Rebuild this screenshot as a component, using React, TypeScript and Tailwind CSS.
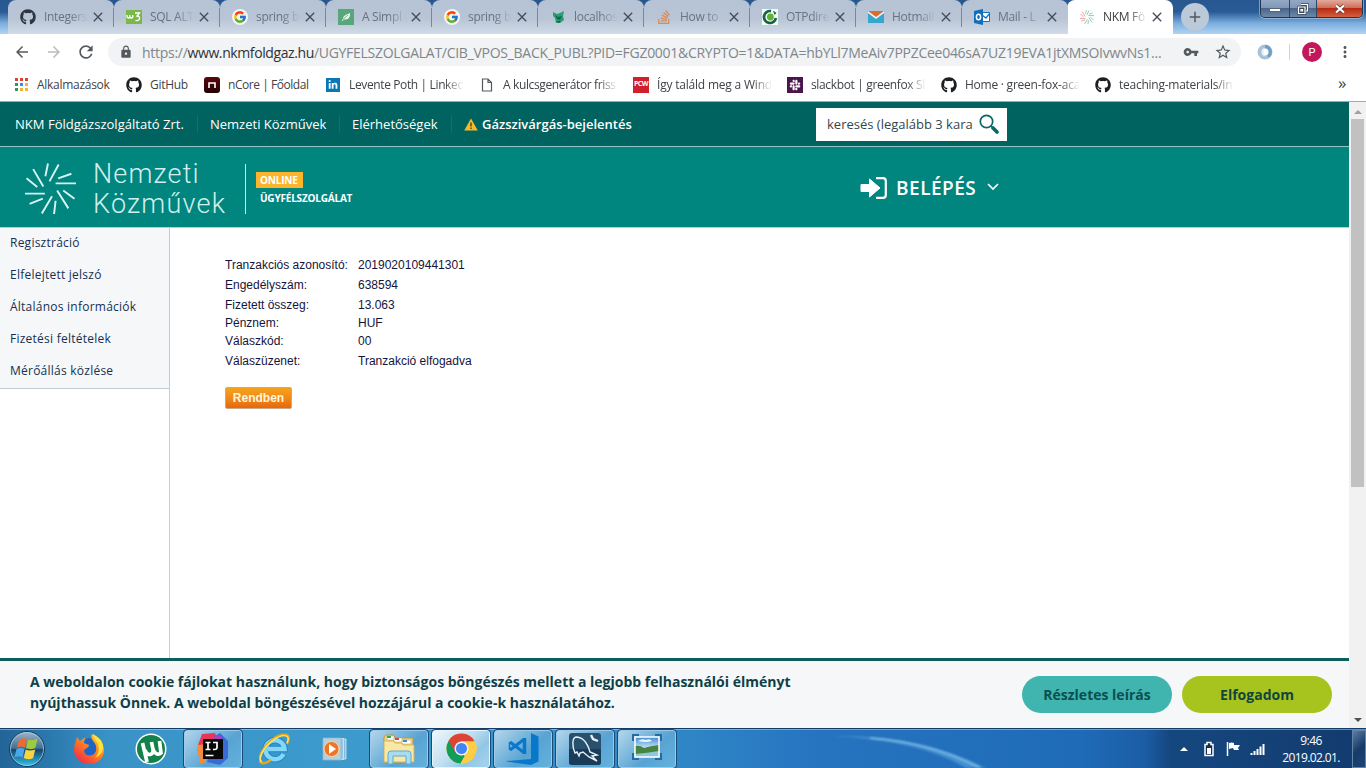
import type { ReactNode } from "react";
import { FaGithub, FaStackOverflow, FaSlack, FaLinkedinIn } from "react-icons/fa";
import { FcGoogle } from "react-icons/fc";
import {
  MdArrowBack, MdArrowForward, MdRefresh, MdLock, MdVpnKey, MdStarBorder, MdMoreVert, MdClose, MdAdd,
} from "react-icons/md";

function Burst({ className, colored }: { className: string; colored?: boolean }) {
  return (
    <svg viewBox="0 0 50 50" className={className} fill="none" stroke="currentColor" strokeWidth={colored ? 2.8 : 1.9}>
      <path d="M22.500 0.500 20 13M33 1.500 24 18M45.500 10.500 32.500 15M50 20H30M48.500 35 37.500 27M42.500 44.500 31.500 27M28.500 50 30 37M16.500 49.500 26.500 32.500" />
      <path stroke={colored ? "#e7858d" : "currentColor"} d="M4.500 40 17.500 35M0 30H19.500M1.500 15 12 23.500M8 6 18 23" />
    </svg>
  );
}

function W3() {
  return (
    <svg viewBox="0 0 16 14" className="h-3.5 w-4">
      <path fill="#7cb848" d="M0 0h16v14H0z" />
      <path d="M1 5v2q1.300 2 2.800 0V5v2q1.500 2 3 0V5M9 3h4.500L11 6q3 .2 2.500 3-.8 2-4 1.500" fill="none" stroke="#fff" strokeWidth="1.300" />
    </svg>
  );
}
function Leaf() {
  return (
    <svg viewBox="0 0 16 16" className="size-4">
      <path fill="#58a67a" d="M0 0h16v16H0z" />
      <path fill="#e9f5ee" d="M12 4c.5 4-1.500 7-6 6.500L4.500 12l-.8-.5 1.500-1.800C5 6.500 8 6 12 4z" />
      <path d="M5 10.500 10 6" stroke="#58a67a" strokeWidth=".8" />
    </svg>
  );
}
function Fox() {
  return (
    <svg viewBox="0 0 16 16" className="size-4">
      <path fill="#2a9d74" d="m3 3 4 2 3-1 4-2-1 5 1 4-4 3H6L5 9 3 7z" />
      <path fill="#17614f" d="m5 6 3 2 4-1-2 4-3-1zM6 12h5l-2 2z" />
    </svg>
  );
}
function Otp() {
  return (
    <svg viewBox="0 0 16 16" className="size-4">
      <path fill="#f4faf4" d="M0 0h16v16H0z" />
      <path d="M9 2.100A6 6 0 1 0 13.900 9" fill="none" stroke="#12654a" strokeWidth="2.700" />
      <circle cx="8.400" cy="8" r="3.400" fill="#62b132" />
      <path fill="#12654a" d="M11 1.500 14.500 4l-2 2z" />
    </svg>
  );
}
function Hotmail() {
  return (
    <svg viewBox="0 0 16 12" className="h-3 w-4">
      <path fill="#37a6cd" d="M0 0h16v12H0z" />
      <path fill="#e9f6fa" d="M0 0h16v2L8 8 0 2z" />
      <path fill="#e0692c" d="M0 0h16L8 6z" />
    </svg>
  );
}
function Outlook() {
  return (
    <svg viewBox="0 0 16 16" className="size-4">
      <path fill="#fff" stroke="#1273c0" d="M8 3.500h7.500v9H8z" />
      <path d="m8 6 4 3 4-5" fill="none" stroke="#1273c0" strokeWidth="1.300" />
      <path fill="#0f6fbe" d="m0 2 9-2v16l-9-2z" />
      <ellipse cx="4.500" cy="8" rx="2.100" ry="2.800" fill="none" stroke="#fff" strokeWidth="1.500" />
    </svg>
  );
}
const google = <span className="rounded-full bg-white/80 p-px"><FcGoogle className="size-3.5" /></span>;

const tabs: { title: string; icon: ReactNode }[] = [
  { title: "Integers", icon: <FaGithub className="size-4 text-[#2f3640]" /> },
  { title: "SQL ALT", icon: <W3 /> },
  { title: "spring b", icon: google },
  { title: "A Simpl", icon: <Leaf /> },
  { title: "spring b", icon: google },
  { title: "localhos", icon: <Fox /> },
  { title: "How to", icon: <FaStackOverflow className="size-4 text-[#d98a55]" /> },
  { title: "OTPdire", icon: <Otp /> },
  { title: "Hotmail", icon: <Hotmail /> },
  { title: "Mail - L", icon: <Outlook /> },
  { title: "NKM Fö", icon: <Burst className="size-3.5 text-[#6cbfa6]" colored /> },
];

function TabStrip() {
  return (
    <div className="relative flex h-[34px] bg-[linear-gradient(180deg,#28578f_0%,#2a5b95_35%,#7aaede_68%,#b2d3f3_100%)] pl-2">
      {tabs.map((t, i) => {
        const active = i === 10;
        return (
          <div
            key={i}
            className={
              active
                ? "-ml-px flex h-[34px] w-[106px] items-center rounded-t-lg bg-white pl-3 text-[#3c4043]"
                : "relative flex h-[34px] w-[106px] items-center rounded-t-lg bg-[linear-gradient(180deg,#b5c3d5,#b9c5d5_55%,#d1dce9)] pl-3 text-[#687381]"
            }
          >
            <span className="flex w-4 justify-center">{t.icon}</span>
            <span className="ml-2 w-[43px] overflow-hidden text-[12px] leading-4 tracking-[-0.3px] whitespace-nowrap [mask-image:linear-gradient(90deg,#000_60%,rgba(0,0,0,0.050))]">
              {t.title}
            </span>
            <MdClose className="ml-[3px] size-4 text-[#454c55]" />
            {!active && i < 9 && <span className="absolute top-2 right-0 h-[19px] w-px bg-[#7c8894]" />}
          </div>
        );
      })}
      <div className="mt-[3px] ml-2 flex size-7 items-center justify-center rounded-full bg-[#bcc9d8]">
        <MdAdd className="size-[18px] text-[#515960]" />
      </div>
      <div className="absolute top-0 right-[3px] flex h-[18px] w-[103px] overflow-hidden rounded-b-[5px] border border-t-0 border-[#1f3550] shadow-[0_0_0_1px_rgba(185,203,224,0.6)]">
        <div className="flex w-[29px] items-end justify-center border-r border-[#30455f] bg-[linear-gradient(180deg,#93a9c5,#8097b5_48%,#4a6689_50%,#6d88aa)] pb-[5px]">
          <span className="h-[4px] w-3 border border-[#56657a] bg-white" />
        </div>
        <div className="flex w-[27px] items-center justify-center border-r border-[#30455f] bg-[linear-gradient(180deg,#93a9c5,#8097b5_48%,#4a6689_50%,#6d88aa)]">
          <svg viewBox="0 0 12 12" className="size-3"><path d="M4 1.500h6.500V8H9M1.500 4H8v6.500H1.500zM4 6.500h1.500v1.500H4z" fill="none" stroke="#3c4a5c" strokeWidth="2.400" /><path d="M4 1.500h6.500V8H9M1.500 4H8v6.500H1.500zM4 6.500h1.500v1.500H4z" fill="none" stroke="#fff" strokeWidth="1.200" /></svg>
        </div>
        <div className="flex flex-1 items-center justify-center bg-[linear-gradient(180deg,#e2aa9b,#cf6f5b_45%,#b82b13_50%,#d3603f)]">
          <svg viewBox="0 0 12 10" className="h-2.5 w-3"><path d="M2 1.500 10 8.500M10 1.500 2 8.500" stroke="#54342f" strokeWidth="3.600" /><path d="M2 1.500 10 8.500M10 1.500 2 8.500" stroke="#fff" strokeWidth="2.200" /></svg>
        </div>
      </div>
    </div>
  );
}

function Toolbar() {
  return (
    <div className="flex h-[37px] items-center bg-white pb-px pl-[13px] text-[#55595d]">
      <MdArrowBack className="size-[18px]" />
      <MdArrowForward className="ml-[14px] size-[18px] text-[#babcbe]" />
      <MdRefresh className="ml-[13px] size-5" />
      <div className="ml-3 flex h-7 w-[1133px] items-center rounded-full bg-[#f1f3f4] pl-[11px]">
        <MdLock className="size-3.5" />
        <span className="ml-[9px] w-[1029px] text-[14px] tracking-[-0.28px] whitespace-nowrap text-[#80868b]">
          https://<span className="tracking-[-0.4px] text-[#2f3236]">www.nkmfoldgaz.hu</span>/UGYFELSZOLGALAT/CIB_VPOS_BACK_PUBL?PID=FGZ0001&amp;CRYPTO=1&amp;DATA=hbYLl7MeAiv7PPZCee046sA7UZ19EVA1jtXMSOIvwvNs1...
        </span>
        <span className="ml-3 flex items-center">
          <MdVpnKey className="size-4" />
          <MdStarBorder className="ml-[15px] size-[18px]" />
        </span>
      </div>
      <svg viewBox="0 0 16 16" className="ml-4 size-4" fill="none">
        <circle cx="8" cy="8" r="5.500" stroke="#a9c2d8" strokeWidth="4" />
        <path d="M8 2.500a5.500 5.500 0 0 1 3 10" stroke="#6f9cc4" strokeWidth="3" />
        <path d="M7 4.500Q4 8 7.500 12" stroke="#e6eef5" strokeWidth="1.500" />
      </svg>
      <span className="ml-4 h-4 w-px bg-[#d0d3d6]" />
      <span className="ml-3 flex size-5 items-center justify-center rounded-full bg-[#c2185b] pt-px font-[Roboto] text-[11px] leading-none text-white">P</span>
      <MdMoreVert className="ml-[14px] size-[18px]" />
    </div>
  );
}

const gh = <FaGithub className="size-4 text-[#1b1f23]" />;
const bookmarks: { title: string; icon: ReactNode; box: string }[] = [
  {
    title: "Alkalmazások",
    box: "w-[113px] tracking-[-0.28px]",
    icon: (
      <span className="grid size-[13px] grid-cols-3 gap-[2px]">
        {["bg-[#d94235]", "bg-[#d94235]", "bg-[#d94235]", "bg-[#2a9c57]", "bg-[#4285f4]", "bg-[#efb52c]", "bg-[#2a9c57]", "bg-[#efb52c]", "bg-[#efb52c]"].map((c, i) => <span key={i} className={c} />)}
      </span>
    ),
  },
  { title: "GitHub", box: "w-[78px] tracking-[-0.3px]", icon: gh },
  { title: "nCore | Főoldal", box: "w-[121px] tracking-[-0.45px]", icon: <span className="flex size-4 items-center justify-center rounded-[3px] bg-[linear-gradient(#5a090c,#210204)]"><svg viewBox="0 0 8 6" className="h-1.5 w-2"><path d="M1 6V1h6v5" fill="none" stroke="#fff" strokeWidth="1.600" /></svg></span> },
  { title: "Levente Poth | Linked", box: "w-[154px] tracking-[-0.37px]", icon: <span className="flex size-3.5 items-center justify-center bg-[#0a77b5] text-white"><FaLinkedinIn className="size-2.5" /></span> },
  { title: "A kulcsgenerátor friss", box: "w-[154px] tracking-[-0.37px]", icon: <svg viewBox="0 0 12 14" className="h-3.5 w-3" fill="none" stroke="#55595d" strokeWidth="1.200"><path d="M1.500 1h5.500l3.500 3.500V13h-9zM7 1v3.500h3.500" /></svg> },
  { title: "Így találd meg a Wind", box: "w-[154px] tracking-[-0.2px]", icon: <span className="flex size-4 items-center justify-center bg-[#d0202a] text-[7px] font-bold tracking-[-0.5px] text-white">PCW</span> },
  { title: "slackbot | greenfox Sl", box: "w-[154px] tracking-[-0.35px]", icon: <span className="flex size-4 items-center justify-center bg-[#4a154b] text-white"><FaSlack className="size-3" /></span> },
  { title: "Home · green-fox-aca", box: "w-[154px] tracking-[-0.24px]", icon: gh },
  { title: "teaching-materials/in", box: "w-[154px] tracking-[-0.25px]", icon: gh },
];

function Bookmarks() {
  return (
    <div className="flex h-[31px] items-center border-b border-[#8fb3b0] bg-white pb-[3px] pl-[13px] text-[12px] text-[#3f4347]">
      {bookmarks.map((b, i) => (
        <div key={i} className={`flex shrink-0 items-center ${b.box}`}>
          <span className="flex w-4 justify-center">{b.icon}</span>
          <span className={i > 2 ? "ml-2 w-[114px] overflow-hidden whitespace-nowrap [mask-image:linear-gradient(90deg,#000_84%,rgba(0,0,0,0.050))]" : "ml-2 whitespace-nowrap"}>{b.title}</span>
        </div>
      ))}
      <span className="ml-[89px] pb-[3px] text-[17px] leading-4">»</span>
    </div>
  );
}

function Site() {
  const rows = [
    ["Tranzakciós azonosító:", "2019020109441301", "h-5"],
    ["Engedélyszám:", "638594", "h-5"],
    ["Fizetett összeg:", "13.063", "h-[18px]"],
    ["Pénznem:", "HUF", "h-[18px]"],
    ["Válaszkód:", "00", "h-5"],
    ["Válaszüzenet:", "Tranzakció elfogadva", "h-5"],
  ];
  return (
    <div className="flex h-[626px]">
      <div className="flex w-[1349px] flex-col bg-white">
        <div className="flex h-[45px] items-center border-b border-[#8fc6c2] bg-[#00635f] pl-[15px] text-[13px] text-white">
          <span className="w-[182px] pt-px tracking-[0.02px]">NKM Földgázszolgáltató Zrt.</span>
          <span className="h-[18px] w-px bg-[#0a7370]" />
          <span className="ml-3 w-[129px] pt-px">Nemzeti Közművek</span>
          <span className="h-[18px] w-px bg-[#0a7370]" />
          <span className="ml-3 w-[99px] pt-px">Elérhetőségek</span>
          <span className="h-[18px] w-px bg-[#0a7370]" />
          <svg viewBox="0 0 14 13" className="ml-3 h-[13px] w-3.5"><path fill="#f7b928" d="M7 .5 13.800 12.500H.2z" /><path d="M7 4.500v4M7 9.500v1.500" stroke="#4b5a35" strokeWidth="1.600" /></svg>
          <span className="ml-1 w-[334px] pt-px font-semibold">Gázszivárgás-bejelentés</span>
          <div className="flex h-[33px] w-[191px] items-center bg-white pl-[11px] text-[#33464f]">
            <span className="w-[152px] pt-0.5 whitespace-nowrap">keresés (legalább 3 kara</span>
            <svg viewBox="0 0 20 20" className="size-5" fill="none" stroke="#0b6863"><circle cx="7.500" cy="7.500" r="6.200" strokeWidth="1.700" /><path d="m12 12 2 2" strokeWidth="1.700" /><path d="m14 14 4 4" strokeWidth="3.600" strokeLinecap="round" /></svg>
          </div>
        </div>
        <div className="flex h-[81px] items-center border-b border-[#a9d5d3] bg-[#00857f] text-white">
          <Burst className="mt-[3px] ml-[25px] size-[51px] text-[#d8f3f1]" />
          <div className="mt-[3px] ml-[17px] w-[152px] font-[Roboto,sans-serif] text-[27px] leading-[30px] font-light text-[#d0efec]">
            <div className="tracking-[1.15px]">Nemzeti</div>
            <div className="tracking-[1.2px]">Közművek</div>
          </div>
          <span className="mt-1 h-[50px] w-px bg-[#d0efec]" />
          <div className="mt-1 ml-[10px] w-[604px] text-[10px] leading-4 font-bold">
            <div className="h-4 w-[47px] bg-[#fbb52c] pl-1 tracking-[-0.2px]">ONLINE</div>
            <div className="mt-[2px] pl-1 tracking-[-0.2px]">ÜGYFÉLSZOLGÁLAT</div>
          </div>
          <svg viewBox="0 0 27 22" className="mt-px h-[22px] w-[27px]"><path fill="#fff" d="M1 7.500h8.500V2l10.500 9-10.500 9v-5.500H1z" stroke="#fff" strokeLinejoin="round" /><path d="M16 1.200h7q2.800 0 2.800 2.800v14q0 2.800-2.800 2.800h-7" fill="none" stroke="#fff" strokeWidth="2.200" /></svg>
          <span className="mt-0.5 ml-[9px] w-[91px] text-[19px] font-semibold tracking-[0.5px]">BELÉPÉS</span>
          <svg viewBox="0 0 12 8" className="h-2 w-3"><path d="m1 1 5 5 5-5" fill="none" stroke="#fff" strokeWidth="1.700" /></svg>
        </div>
        <div className="flex h-[430px]">
          <div className="w-[170px] border-r border-[#c3ccd4]">
            <div className="h-[161px] border-b border-[#c3ccd4] bg-[#f5f7f9] pl-[10px] text-[12px] leading-8 text-[#183050]">
              {["Regisztráció", "Elfelejtett jelszó", "Általános információk", "Fizetési feltételek", "Mérőállás közlése"].map((s) => (
                <div key={s} className="h-8 -translate-y-px tracking-[0.24px]">{s}</div>
              ))}
            </div>
          </div>
          <div className="pt-7 pl-[55px] font-['Liberation_Sans',sans-serif] text-[12px] text-[#14143c]">
            {rows.map(([a, b, h]) => (
              <div key={a} className={`flex leading-[18px] ${h}`}>
                <span className="w-[133px]">{a}</span>
                <span>{b}</span>
              </div>
            ))}
            <button className="mt-[15px] block h-[22px] w-[67px] rounded-[2px] border border-[#c9a98a] bg-[linear-gradient(180deg,#f6a21c,#f08a18_50%,#e8660d)] text-[12px] leading-5 font-bold text-[#fff5dc]">Rendben</button>
          </div>
        </div>
        <div className="flex h-[70px] items-center border-t-[3px] border-[#0c5f5b] bg-[#f5f7f9] pl-[30px] text-[14px] font-bold text-[#0f3f46]">
          <p className="w-[992px] pb-[5px] leading-[21px]">
            A weboldalon cookie fájlokat használunk, hogy biztonságos böngészés mellett a legjobb felhasználói élményt<br />
            nyújthassuk Önnek. A weboldal böngészésével hozzájárul a cookie-k használatához.
          </p>
          <span className="flex h-[37px] w-[150px] items-center justify-center rounded-full bg-[#40b5b0] text-[#0b4f50]">Részletes leírás</span>
          <span className="ml-[10px] flex h-[37px] w-[150px] items-center justify-center rounded-full bg-[#a7c31d] text-[#12453f]">Elfogadom</span>
        </div>
      </div>
      <div className="flex w-[17px] flex-col items-center bg-[#f1f1f1] py-1.5">
        <span className="mt-0.5 border-x-4 border-b-4 border-x-transparent border-b-[#a0a0a0]" />
        <span className="mt-[5px] h-[368px] w-[13px] bg-[#c1c1c1]" />
        <span className="mt-auto border-x-4 border-t-4 border-x-transparent border-t-[#505050]" />
      </div>
    </div>
  );
}

const FirefoxIcon = (
  <svg viewBox="0 0 32 32" className="size-8">
    <defs>
      <linearGradient id="ff" x1="1" y1="0" x2=".2" y2="1"><stop offset="0" stopColor="#ffe83a" /><stop offset=".45" stopColor="#ff8b1c" /><stop offset="1" stopColor="#f0284c" /></linearGradient>
    </defs>
    <circle cx="16" cy="15" r="10" fill="#1f65c4" />
    <path fill="url(#ff)" d="M19 1c4 3 5 5 6 7 4 2 6 6 6 9 0 9-7 14-15 14S1 25 1 17C1 12 3 8 4 4l3 4c2-2 4-3 6-3-2 2-2 4-2 5l5 2c0 3-4 3-5 6 1 6 10 6 12 0 1-5-1-8-3-10-2-3-2-5-1-7z" />
    <path fill="#ffe23d" d="M20 1c0 4 3 6 5 10 2 6 0 11-3 14 5-2 9-7 8-13-1-5-5-8-10-11z" />
  </svg>
);
const UtorrentIcon = (
  <svg viewBox="0 0 32 32" className="size-8">
    <circle cx="16" cy="16" r="15.500" fill="#fff" />
    <circle cx="16" cy="16" r="14" fill="#13814a" />
    <path d="m7.500 10 4.500 19M10 17c2 7 9 5 8-.5L16.500 9M18 16c2 6 6 6 8 4L24.500 8" fill="none" stroke="#fff" strokeWidth="3.700" />
  </svg>
);
const IntellijIcon = (
  <svg viewBox="0 0 32 32" className="size-8">
    <path fill="#e9345c" d="M5 1 18 0l3 10-15 8L1 12z" />
    <path fill="#f48b3c" d="m1 12 8-1v18l-6 2-1-8-2-4z" />
    <path fill="#3c68d8" d="m18 3 5-3 8 8v17l-8 7-13-3z" />
    <path fill="#a442c0" d="m18 2 7 1-1 7-7-2z" />
    <path fill="#080808" d="M6 6h20v20H6z" />
    <path d="M8.500 9.500h5M11 9.500v7M8.500 16.500h5M16 9.500h4v5.500q-.5 2-4 1.300M8.500 22.500h8" fill="none" stroke="#fff" strokeWidth="1.700" />
  </svg>
);
const IeIcon = (
  <svg viewBox="0 0 32 32" className="size-8" fill="none">
    <path d="M24.500 21a9.500 9.500 0 1 1 1-5H9" stroke="#2386c8" strokeWidth="6.500" />
    <path d="M24.500 21a9.500 9.500 0 1 1 1-5H9" stroke="#83d8f8" strokeWidth="4.500" />
    <path d="M28 11c6-12-6-11-15-4S-3 28 3 30c3 1 6-1 9-3" stroke="#e2a820" strokeWidth="2.600" />
    <path d="M28 10c5-10-6-9-15-2S-2 27 3 29" stroke="#ffe56a" strokeWidth="1.400" />
  </svg>
);
const WmpIcon = (
  <svg viewBox="0 0 30 28" className="h-7 w-[30px]">
    <path fill="#86bddf" stroke="#d5ebf7" strokeWidth=".8" d="M9 4h15v20H9z" />
    <path fill="#96c6e2" stroke="#d5ebf7" strokeWidth=".8" d="M5 3.500h16.500v21H5z" />
    <path fill="#b4cfdd" stroke="#8fb6cc" strokeWidth=".8" d="M1 3h18v22H1z" />
    <circle cx="9.500" cy="14" r="7.500" fill="#ee7526" stroke="#ffd4a8" />
    <path fill="#fff" d="m7 9 7 5-7 5z" />
  </svg>
);
const ExplorerIcon = (
  <svg viewBox="0 0 34 32" className="h-8 w-[34px]">
    <path fill="#efd786" stroke="#b69745" d="M2 4 4 2h8l1 3h18v24H2z" />
    <path fill="#fff" stroke="#bda65a" strokeWidth=".5" d="M5 3h7v4H5zM12 5h8v4h-8zM20 7h9v4h-9z" />
    <path fill="#35a853" d="M5 3h4v2H5z" /><path fill="#d1493b" d="M13 5h4v2h-4z" /><path fill="#3b8dcc" d="M21 7h4v2h-4z" />
    <path fill="#f9e8a5" stroke="#d2b565" d="M2 8h10l1 2h7l1 2h11v17H2z" />
    <path fill="#aadcf1" stroke="#5da9ce" d="M6 31V21q0-3 3-3h17q3 0 3 3v10h-5v-8H11v8z" />
  </svg>
);
const ChromeIcon = (
  <svg viewBox="0 0 32 32" className="size-[31px]">
    <circle cx="16" cy="16" r="15.500" fill="#ffcd40" />
    <path fill="#0f9d58" d="M2.600 8.200 16 16l3 8-4 7.500A15.500 15.500 0 0 1 2.600 8.200z" />
    <path fill="#ffcd40" d="M16 8.500h13.500A15.500 15.500 0 0 1 15 31.500l7.500-11.800z" />
    <path fill="#db4437" d="M9.500 19.700 2.600 8.200A15.500 15.500 0 0 1 29.500 8.500H16z" />
    <circle cx="16" cy="16" r="7.200" fill="#f3f3f3" /><circle cx="16" cy="16" r="5.700" fill="#4285f4" />
  </svg>
);
const CodeIcon = (
  <svg viewBox="0 0 34 32" className="h-8 w-[34px]">
    <path fill="#0878cb" d="m25 0 7.500 3.500v25L25 32 .5 28.500V28L25 26z" />
    <path d="M18.500 5v16" stroke="#0878cb" strokeWidth="3.500" />
    <path d="M18.500 6 4 17M4 9l14.500 11" fill="none" stroke="#0878cb" strokeWidth="3" />
    <path d="M3.500 9v8" stroke="#0878cb" strokeWidth="1.500" />
  </svg>
);
const WorkbenchIcon = (
  <svg viewBox="0 0 32 32" className="size-8">
    <rect width="32" height="32" rx="3" fill="#28506f" />
    <path fill="#183c59" d="M0 16h32v13q0 3-3 3H3q-3 0-3-3z" />
    <path d="M6 20C3 13 3 5 7 4c8 0 12 8 14 15l7 3-5 1 5 5-8-4-6-5-3 1-1 3-2-4z" fill="none" stroke="#e8f0f5" strokeWidth="1.400" />
    <path d="m22 2 2 4 5 2" fill="none" stroke="#e8f0f5" strokeWidth="2.400" />
  </svg>
);
const PhotoIcon = (
  <svg viewBox="0 0 30 26" className="mb-1 h-[26px] w-[30px]">
    <defs><linearGradient id="ph" x1="0" y1="0" x2="0" y2="1"><stop offset="0" stopColor="#3a8bd6" /><stop offset=".6" stopColor="#d5edfa" /></linearGradient></defs>
    <path d="M1 7V1h6M23 1h6v6M29 19v6h-6M7 25H1v-6" fill="none" stroke="#256aa4" strokeWidth="2" />
    <path fill="url(#ph)" d="M3 3h24v20H3z" />
    <path fill="#8fc7dc" d="M3 17h24v6H3z" />
    <path fill="#47843f" d="M3 12q5-1 9 2 6-2 15-3v6q-12 2-24 3z" />
    <path fill="#e8f4fa" d="M6 7q4-3 8-1 4-2 6 1-6 2-14 0z" />
    <path fill="none" stroke="#fff" strokeWidth="1.500" d="M3 3h24v20H3z" />
  </svg>
);

const tasks: { icon: ReactNode; state: "none" | "open" | "active" }[] = [
  { icon: FirefoxIcon, state: "none" },
  { icon: UtorrentIcon, state: "none" },
  { icon: IntellijIcon, state: "open" },
  { icon: IeIcon, state: "none" },
  { icon: WmpIcon, state: "none" },
  { icon: ExplorerIcon, state: "open" },
  { icon: ChromeIcon, state: "active" },
  { icon: CodeIcon, state: "open" },
  { icon: WorkbenchIcon, state: "open" },
  { icon: PhotoIcon, state: "open" },
];
const frame = {
  none: "",
  open: "rounded-[3px] border border-[#9fcae6] bg-[linear-gradient(135deg,#b5d5ea_0%,#7cb8dd_35%,#58a3d3_60%,#64b2dd)] outline outline-[#194a78]",
  active: "rounded-[3px] border border-[#e9f5fc] bg-[linear-gradient(135deg,#eef6fb_0%,#c1dff1_45%,#93c6e6_70%,#a5d3ee)] outline outline-[#194a78]",
};

function Taskbar() {
  return (
    <div className="flex h-10 items-center border-t border-[#123d68] bg-[linear-gradient(90deg,#226497_0,#2d7bb0_55px,#3a93c7_110px,#3d9ccd_400px,#3088c7_670px,#2673c0_820px,#1f6bb8_1080px,#1c5da5_1145px,#15477f_1170px,#123b6e_1366px)] shadow-[inset_0_1px_0_rgba(190,220,245,.5)]">
      <svg viewBox="0 0 38 38" className="ml-2 size-[38px] shrink-0">
        <defs>
          <linearGradient id="orb" x1="0" y1="0" x2="0" y2="1"><stop offset="0" stopColor="#9eb6c9" /><stop offset=".48" stopColor="#426f94" /><stop offset=".52" stopColor="#12456c" /><stop offset="1" stopColor="#35c6ee" /></linearGradient>
        </defs>
        <circle cx="19" cy="19" r="17.500" fill="url(#orb)" stroke="#123c5e" />
        <circle cx="19" cy="19" r="16.500" fill="none" stroke="#b4d4e6" strokeOpacity=".7" />
        <path fill="#ef6a2f" d="M11 10q4-3 8-1l-2 8.500q-4-2-8 0z" />
        <path fill="#9ccb3c" d="M20 9.500q4 2 9.500-1l-2 9q-4 3-9.500.5z" />
        <path fill="#4aa8e8" d="M8.500 19q4-2 8 0l-2 8.500q-4-2-8 0z" />
        <path fill="#fbd23f" d="M17.700 19.500q4 2 9.500 0l-2 8.500q-4 2.500-9.500 0z" />
      </svg>
      <div className="ml-[14px] flex gap-1">
        {tasks.map((t, i) => (
          <div key={i} className={`flex h-[38px] w-[58px] items-center justify-center ${frame[t.state]}`}>{t.icon}</div>
        ))}
      </div>
      <svg viewBox="0 0 160 38" className="ml-[154px] h-[38px] w-40 blur-[1px]">
        <path d="M0 6Q90 4 156 38H136Q90 10 0 6z" fill="#69b4e8" opacity=".5" />
        <path d="M40 8Q100 12 150 38" fill="none" stroke="#a9dcfa" strokeWidth="1.500" opacity=".7" />
      </svg>
      <div className="ml-auto flex h-full items-center text-white">
        <span className="border-x-4 border-b-4 border-x-transparent border-b-white" />
        <svg viewBox="0 0 10 16" className="ml-4 h-4 w-2.5"><path d="M3 1.500h4v2h2v11H1v-11h2z" fill="#14304f" stroke="#fff" strokeWidth="1.500" /><path d="M3 7h4v6H3z" fill="#fff" /></svg>
        <svg viewBox="0 0 15 15" className="ml-3 size-[15px]"><path d="M1.500 1v14" stroke="#fff" strokeWidth="1.500" /><path fill="#fff" d="M3 2q3-1 5 0v2h6l-2 3 1 2H8L7 7 3 8z" /></svg>
        <svg viewBox="0 0 15 12" className="ml-[9px] h-3 w-[15px]"><path d="M1.500 10v2M4.500 8v4M7.500 6v6M10.500 3.500V12M13.500 1v11" stroke="#fff" strokeWidth="2" /></svg>
        <div className="ml-4 w-[60px] text-center text-[12px] leading-[17px] tracking-[-0.6px] whitespace-nowrap">9:46<br />2019.02.01.</div>
        <span className="ml-[11px] h-[38px] w-[14px] border border-[#6284a7] bg-[linear-gradient(135deg,#5d7ea4,#173c69_50%,#1b4475)]" />
      </div>
    </div>
  );
}

export default function App() {
  return (
    <div className="h-[768px] w-[1366px] overflow-hidden bg-white font-['Open_Sans',sans-serif]">
      <TabStrip />
      <Toolbar />
      <Bookmarks />
      <Site />
      <Taskbar />
    </div>
  );
}
